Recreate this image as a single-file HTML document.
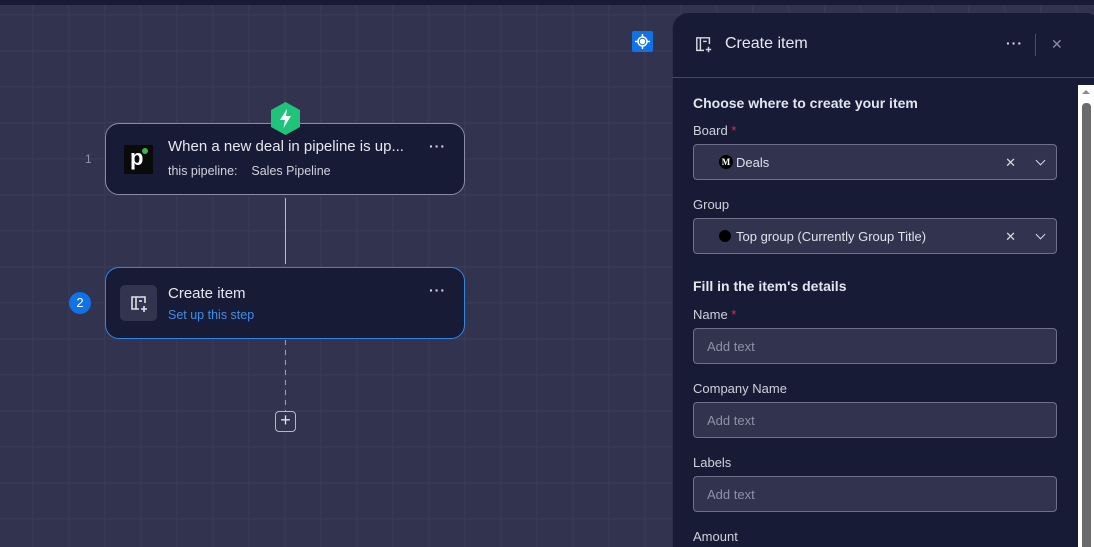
<!DOCTYPE html>
<html><head><meta charset="utf-8"><style>
*{box-sizing:border-box;margin:0;padding:0}
html,body{width:1094px;height:547px;overflow:hidden}
body{position:relative;font-family:"Liberation Sans",sans-serif;
background-color:#32334f;
background-image:linear-gradient(90deg,#383955 1.5px,transparent 1.5px),linear-gradient(#383955 1.5px,transparent 1.5px);
background-size:36px 36px;background-position:32px 14px}
.top{position:absolute;left:0;top:0;width:1094px;height:5px;background:#181b36}
.abs{position:absolute}
.card{position:absolute;left:105px;width:360px;height:72px;background:#181b36;border:1px solid #8b8ca3;border-radius:14px}
.t{color:#e6e7ef;font-size:15px}
.dots{position:absolute;right:18px;top:14px;color:#d6d7e3;font-size:14px;letter-spacing:1px;font-weight:bold}
.panel{position:absolute;left:672px;top:13px;width:430px;height:534px;background:#181b36;border-radius:16px 16px 0 0;border-left:1px solid #2c2e4a}
.lbl{position:absolute;left:693px;color:#d0d1dc;font-size:13px}
.h{position:absolute;left:693px;color:#e4e5ee;font-size:14px;font-weight:bold}
.inp{position:absolute;left:693px;width:364px;height:36px;background:#32334f;border:1px solid #6e7089;border-radius:4px;color:#8f90a6;font-size:13px;padding:0 13px;display:flex;align-items:center}
.star{color:#c8365a}
.x{position:absolute;right:40px;top:10px;color:#d8d9e3;font-size:13px}
.chev{position:absolute;right:12px;top:12px;width:7px;height:7px;border-right:1.5px solid #d8d9e3;border-bottom:1.5px solid #d8d9e3;transform:rotate(45deg)}
</style></head><body>
<div class="top"></div>

<div class="abs" style="left:285px;top:198px;width:1px;height:66px;background:#b9bac8"></div>
<div class="abs" style="left:285px;top:340px;width:1px;height:72px;background:repeating-linear-gradient(#9c9db0 0 5px,transparent 5px 10px)"></div>
<div class="abs" style="left:275px;top:411px;width:21px;height:21px;border:1.5px solid #b5b6c6;border-radius:4px;background:#32334f;color:#e0e1ea;font-size:18px;line-height:17px;text-align:center">+</div>

<div class="abs" style="left:85px;top:152px;color:#8f93ad;font-size:12px">1</div>
<div class="card" style="top:123px">
  <div class="abs" style="left:18px;top:21px;width:29px;height:29px;background:#0a0a0a"><span style="position:absolute;left:6px;top:0px;color:#fff;font-weight:bold;font-size:22px">p</span><span style="position:absolute;left:18px;top:3px;width:6px;height:6px;border-radius:50%;background:#3db24d"></span></div>
  <div class="abs t" style="left:62px;top:14px">When a new deal in pipeline is up...</div>
  <div class="abs" style="left:62px;top:40px;color:#d0d1dc;font-size:12.5px">this pipeline:&nbsp;&nbsp;&nbsp;&nbsp;Sales Pipeline</div>
  <div class="dots">···</div>
</div>
<svg class="abs" style="left:269px;top:101px" width="33" height="35" viewBox="0 0 33 35"><polygon points="16.5,1 31,9 31,26 16.5,34 2,26 2,9" fill="#1fc37a"/><path d="M18 8 L11 19 H16 L14.5 27 L22 15 H17 Z" fill="#fff"/></svg>

<div class="abs" style="left:69px;top:292px;width:22px;height:22px;border-radius:50%;background:#0f73e6;color:#fff;font-size:13px;text-align:center;line-height:22px">2</div>
<div class="card" style="top:267px;border:1.5px solid #2f86e3">
  <div class="abs" style="left:14px;top:17px;width:37px;height:36px;background:#33344f;border-radius:5px">
    <svg class="abs" style="left:9px;top:9px" width="20" height="20" viewBox="0 0 20 20" fill="none" stroke="#e0e1ea" stroke-width="1.6"><path d="M10 15H3V3h13v6"/><path d="M7 3v12"/><path d="M10 7h3"/><path d="M15 12v6M12 15h6"/></svg>
  </div>
  <div class="abs t" style="left:62px;top:17px">Create item</div>
  <div class="abs" style="left:62px;top:40px;color:#3b8fe8;font-size:12.5px">Set up this step</div>
  <div class="dots">···</div>
</div>

<div class="abs" style="left:632px;top:31px;width:21px;height:21px;background:#0f73e6;border-radius:2px">
<svg width="21" height="21" viewBox="0 0 21 21" fill="none" stroke="#fff" stroke-width="1.5"><circle cx="10.5" cy="10.5" r="4.5"/><circle cx="10.5" cy="10.5" r="2" fill="#fff"/><path d="M10.5 3v3M10.5 15v3M3 10.5h3M15 10.5h3"/></svg></div>

<div class="panel"></div>
<svg class="abs" style="left:695px;top:36px" width="18" height="18" viewBox="0 0 20 20" fill="none" stroke="#d8d9e3" stroke-width="1.6"><path d="M10 16H2V2h14v7"/><path d="M6 2v14"/><path d="M9 6h4"/><path d="M15 12v6M12 15h6"/></svg>
<div class="abs" style="left:725px;top:35px;color:#e6e7ef;font-size:16px">Create item</div>
<div class="abs" style="left:1006px;top:35px;color:#d8d9e3;font-size:14px;font-weight:bold;letter-spacing:1px">···</div>
<div class="abs" style="left:1035px;top:34px;width:1px;height:22px;background:#4a4c66"></div>
<div class="abs" style="left:1051px;top:36px;color:#8a8ca2;font-size:14px">✕</div>
<div class="abs" style="left:672px;top:77px;width:422px;height:1px;background:#464862"></div>

<div class="abs" style="left:1078px;top:85px;width:16px;height:462px;background:#fff"></div>
<div class="abs" style="left:1082px;top:103px;width:9px;height:444px;background:#6b6b6b;border-radius:4px 4px 0 0"></div>
<div class="abs" style="left:1082px;top:90px;width:0;height:0;border-left:4px solid transparent;border-right:4px solid transparent;border-bottom:4px solid #8a8a8a"></div>

<div class="h" style="top:95px">Choose where to create your item</div>
<div class="lbl" style="top:123px">Board <span class="star">*</span></div>
<div class="inp" style="top:144px;color:#e0e1ea;padding-left:25px"><span style="display:inline-block;width:14px;height:14px;border-radius:50%;background:#000;color:#fff;font-size:9px;text-align:center;line-height:14px;font-family:'Liberation Serif';font-weight:bold;margin-right:3px">M</span>Deals<span class="x">✕</span><span class="chev"></span></div>
<div class="lbl" style="top:197px">Group</div>
<div class="inp" style="top:218px;color:#e0e1ea;padding-left:25px"><span style="display:inline-block;width:12px;height:12px;border-radius:50%;background:#000;margin-right:5px"></span>Top group (Currently Group Title)<span class="x">✕</span><span class="chev"></span></div>

<div class="h" style="top:278px">Fill in the item's details</div>
<div class="lbl" style="top:307px">Name <span class="star">*</span></div>
<div class="inp" style="top:328px">Add text</div>
<div class="lbl" style="top:381px">Company Name</div>
<div class="inp" style="top:402px">Add text</div>
<div class="lbl" style="top:455px">Labels</div>
<div class="inp" style="top:476px">Add text</div>
<div class="lbl" style="top:529px">Amount</div>
</body></html>
